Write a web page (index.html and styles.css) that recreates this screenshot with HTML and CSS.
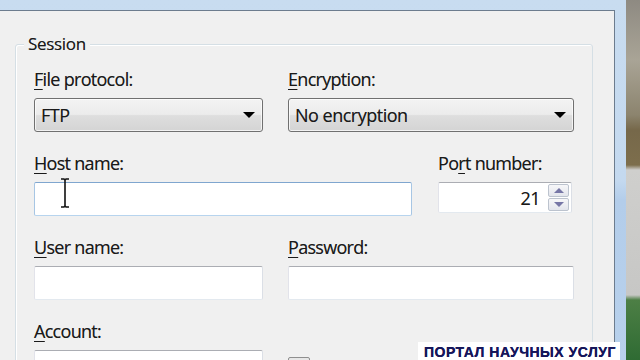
FILE: index.html
```html
<!DOCTYPE html>
<html lang="en">
<head>
    <meta charset="UTF-8">
    <meta name="viewport" content="width=device-width, initial-scale=1.0">
    <title>Login - Session</title>
    <link rel="stylesheet" href="styles.css">
</head>
<body>
    <div class="desktop">
        <!-- Dialog window -->
        <div class="window">
            <div class="dialog">
                <div class="group">
                    <span class="group-title">Session</span>

                    <!-- Protocol row -->
                    <div class="row">
                        <div class="field protocol">
                            <label><u>F</u>ile protocol:</label>
                            <div class="combo"><span>FTP</span><span class="arrow"></span></div>
                        </div>
                        <div class="field encryption">
                            <label><u>E</u>ncryption:</label>
                            <div class="combo"><span>No encryption</span><span class="arrow"></span></div>
                        </div>
                    </div>

                    <!-- Host row -->
                    <div class="row host-row">
                        <div class="field host">
                            <label><u>H</u>ost name:</label>
                            <div class="textbox focused">
                                <svg class="ibeam" width="12" height="30" viewBox="0 0 12 30">
                                    <path d="M2 1h3l1 1 1-1h3M6 2v26M2 29h3l1-1 1 1h3" fill="none" stroke="#111" stroke-width="1.6"/>
                                </svg>
                            </div>
                        </div>
                        <div class="field port">
                            <label>Po<u>r</u>t number:</label>
                            <div class="textbox spin">
                                <span class="value">21</span>
                                <span class="spinner">
                                    <span class="spin-btn"><span class="tri up"></span></span>
                                    <span class="spin-btn"><span class="tri down"></span></span>
                                </span>
                            </div>
                        </div>
                    </div>

                    <!-- Credentials row -->
                    <div class="row">
                        <div class="field user">
                            <label><u>U</u>ser name:</label>
                            <div class="textbox"></div>
                        </div>
                        <div class="field password">
                            <label><u>P</u>assword:</label>
                            <div class="textbox"></div>
                        </div>
                    </div>

                    <!-- Account row -->
                    <div class="row">
                        <div class="field account">
                            <label><u>A</u>ccount:</label>
                            <div class="textbox"></div>
                        </div>
                        <div class="checkbox"></div>
                    </div>
                </div>
            </div>
        </div>
        <div class="wallpaper"></div>
    </div>

    <div class="watermark">ПОРТАЛ НАУЧНЫХ УСЛУГ</div>
</body>
</html>
```

FILE: styles.css
```css
/* General Styles */
body {
    font-family: 'Open Sans', 'Liberation Sans', sans-serif;
    margin: 0;
    padding: 0;
    width: 640px;
    height: 360px;
    overflow: hidden;
    color: #1a1a1a;
    text-shadow: 0 0 0.5px rgba(0, 0, 0, 0.45);
    position: relative;
}

.desktop {
    display: flex;
    height: 360px;
    overflow: hidden;
}

/* Window frame */
.window {
    flex: none;
    width: 626px;
    height: 360px;
    box-sizing: border-box;
    padding: 10px 11px 0 0;
    background: linear-gradient(to bottom, #c8dcf0 0, #c4d9ef 180px, #b3cdea 200px, #b8d1ec 360px);
}

.dialog {
    height: 100%;
    box-sizing: border-box;
    background-color: #f0f0f0;
    border-top: 1px solid #6c7c8e;
    border-right: 1px solid #6c7c8e;
    padding: 33px 0 0 15px;
    overflow: hidden;
}

/* Group box */
.group {
    position: relative;
    width: 578px;
    height: 400px;
    box-sizing: border-box;
    border: 1px solid #d5dfe5;
    border-radius: 3px;
    box-shadow: inset 1px 1px 0 #fff;
    padding: 23px 0 0 18px;
}

.group-title {
    position: absolute;
    top: -12px;
    left: 8px;
    padding: 0 4px;
    background-color: #f0f0f0;
    font-size: 17px;
    line-height: 22px;
    letter-spacing: -0.3px;
}

/* Rows & fields */
.row {
    display: flex;
    gap: 25px;
    margin-bottom: 20px;
}

.host-row {
    gap: 26px;
}

.field label {
    display: block;
    font-size: 18px;
    line-height: 22px;
    letter-spacing: -0.7px;
    margin-bottom: 8px;
    white-space: nowrap;
}

.field u {
    text-decoration-thickness: 1px;
    text-underline-offset: 3px;
}

.protocol, .user, .account { width: 229px; }
.encryption, .password { width: 286px; }
.host { width: 378px; }
.port { width: 134px; }

/* Combo boxes */
.combo {
    height: 34px;
    box-sizing: border-box;
    display: flex;
    align-items: center;
    justify-content: space-between;
    padding: 0 7px 0 6px;
    border: 1px solid #707070;
    border-radius: 3px;
    background: linear-gradient(to bottom, #f3f3f3 0%, #ececec 48%, #dedede 52%, #d4d4d4 100%);
    box-shadow: inset 0 0 0 1px rgba(255, 255, 255, 0.7);
    font-size: 18px;
    letter-spacing: -0.5px;
}

.arrow {
    width: 0;
    height: 0;
    border-left: 6px solid transparent;
    border-right: 6px solid transparent;
    border-top: 6px solid #000;
}

/* Text boxes */
.textbox {
    position: relative;
    height: 34px;
    box-sizing: border-box;
    background-color: #fff;
    border: 1px solid;
    border-color: #abadb3 #dbdfe6 #e3e9ef #e2e3ea;
    border-radius: 2px;
}

.textbox.focused {
    border-color: #7fa6cf #a7c6e4 #b7d4ee #a7c6e4;
}

.ibeam {
    position: absolute;
    left: 24px;
    top: -5px;
}

.textbox.spin {
    height: 31px;
    display: flex;
    align-items: center;
    justify-content: flex-end;
    padding-right: 2px;
    gap: 8px;
}

.value {
    font-size: 18px;
    letter-spacing: -0.5px;
}

.spinner {
    display: flex;
    flex-direction: column;
    gap: 1px;
    width: 21px;
}

.spin-btn {
    height: 11px;
    display: flex;
    align-items: center;
    justify-content: center;
    border: 1px solid #bcc3ce;
    border-radius: 2px;
    background: linear-gradient(to bottom, #f7f7f9, #e3e5ec);
}

.tri {
    width: 0;
    height: 0;
    border-left: 5px solid transparent;
    border-right: 5px solid transparent;
}

.tri.up { border-bottom: 5px solid #7676a6; }
.tri.down { border-top: 5px solid #7676a6; }

/* Checkbox */
.checkbox {
    width: 22px;
    height: 22px;
    box-sizing: border-box;
    margin-top: 37px;
    border: 1px solid #8f8f8f;
    border-radius: 2px;
    background: linear-gradient(to bottom, #e6e6e6, #fdfdfd);
}

/* Desktop behind the window */
.wallpaper {
    flex: 1;
    background: linear-gradient(to bottom, #8e8a82 0, #a9a496 60px, #8c846e 115px, #76684a 130px, #7d6e4c 165px, #cfcfcd 170px, #c7c7c5 295px, #4d7f45 300px, #2f6b33 360px);
}

/* Watermark */
.watermark {
    position: absolute;
    left: 418px;
    top: 342px;
    width: 202px;
    height: 18px;
    box-sizing: border-box;
    padding-left: 6px;
    background-color: #fff;
    color: #16165a;
    text-shadow: 0 0 0.6px #16165a;
    font-family: 'Liberation Sans', Arial, sans-serif;
    font-weight: bold;
    font-size: 14px;
    line-height: 20px;
    letter-spacing: 0.5px;
    white-space: nowrap;
}
```
